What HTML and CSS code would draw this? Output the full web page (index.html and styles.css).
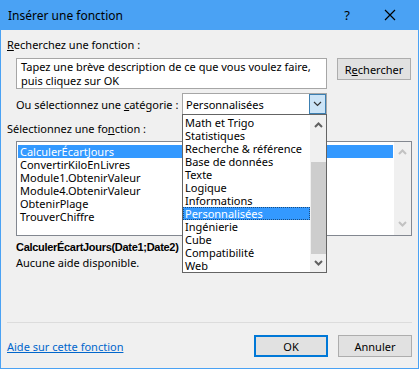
FILE: index.html
```html
<!DOCTYPE html>
<html lang="fr">
<head>
  <meta charset="UTF-8">
  <title>Insérer une fonction</title>
  <link rel="stylesheet" href="styles.css">
</head>
<body>
  <div class="window">
    <div class="titlebar">
      <span class="title">Insérer une fonction</span>
      <span class="help">?</span>
      <svg class="close" width="12" height="12" viewBox="0 0 12 12"><path d="M1 1L11 11M11 1L1 11" stroke="#000" stroke-width="1.2"/></svg>
    </div>
    <div class="content">
      <div class="label"><u>R</u>echerchez une fonction :</div>
      <div class="search-row">
        <div class="search-box">Tapez une brève description de ce que vous voulez faire,<br>puis cliquez sur OK</div>
        <button class="btn">R<u>e</u>chercher</button>
      </div>
      <div class="category-row">
        <span class="cat-label">Ou sélectionnez une <u>c</u>atégorie :</span>
        <div class="select">
          <span class="select-value">Personnalisées</span>
          <span class="select-arrow">
            <svg width="9" height="6" viewBox="0 0 9 6"><path d="M1 1L4.5 4.5L8 1" fill="none" stroke="#333" stroke-width="1.2"/></svg>
          </span>
          <div class="dropdown">
            <ul class="dropdown-items">
              <li>Math et Trigo</li>
              <li>Statistiques</li>
              <li>Recherche &amp; référence</li>
              <li>Base de données</li>
              <li>Texte</li>
              <li>Logique</li>
              <li>Informations</li>
              <li class="selected">Personnalisées</li>
              <li>Ingénierie</li>
              <li>Cube</li>
              <li>Compatibilité</li>
              <li>Web</li>
            </ul>
            <div class="dd-scroll">
              <svg class="arrow-up" width="9" height="6" viewBox="0 0 9 6"><path d="M1 5L4.5 1.5L8 5" fill="none" stroke="#606060" stroke-width="2"/></svg>
              <div class="dd-thumb"></div>
              <svg class="arrow-down" width="9" height="6" viewBox="0 0 9 6"><path d="M1 1L4.5 4.5L8 1" fill="none" stroke="#606060" stroke-width="2"/></svg>
            </div>
          </div>
        </div>
      </div>
      <div class="label fn-label">Sélectionnez une fo<u>n</u>ction :</div>
      <div class="listbox">
        <ul class="list-items">
          <li class="selected">CalculerÉcartJours</li>
          <li>ConvertirKiloEnLivres</li>
          <li>Module1.ObtenirValeur</li>
          <li>Module4.ObtenirValeur</li>
          <li>ObtenirPlage</li>
          <li>TrouverChiffre</li>
        </ul>
        <div class="list-scroll">
          <svg width="9" height="6" viewBox="0 0 9 6"><path d="M1 5L4.5 1.5L8 5" fill="none" stroke="#c2c2c2" stroke-width="2"/></svg>
          <svg width="9" height="6" viewBox="0 0 9 6"><path d="M1 1L4.5 4.5L8 1" fill="none" stroke="#c2c2c2" stroke-width="2"/></svg>
        </div>
      </div>
      <div class="signature">CalculerÉcartJours(Date1;Date2)</div>
      <div class="description">Aucune aide disponible.</div>
      <div class="separator"></div>
      <div class="footer">
        <a class="help-link" href="#">Aide sur cette fonction</a>
        <div class="footer-buttons">
          <button class="btn btn-default">OK</button>
          <button class="btn">Annuler</button>
        </div>
      </div>
    </div>
  </div>
</body>
</html>
```

FILE: styles.css
```css
html, body {
  margin: 0;
  padding: 0;
}
body {
  font-family: 'Noto Sans', 'Liberation Sans', sans-serif;
  font-size: 11px;
  color: #000;
  background: #f0f0f0;
  white-space: nowrap;
}
ul {
  list-style: none;
  margin: 0;
  padding: 0;
}
.window {
  width: 419px;
  height: 369px;
  box-sizing: border-box;
  border: 1px solid #4aa2f4;
  border-top: none;
  background: #f0f0f0;
  display: flex;
  flex-direction: column;
}
.titlebar {
  height: 30px;
  background: #4aa2f4;
  display: flex;
  align-items: center;
  padding-left: 8px;
  margin: 0 -1px;
  flex-shrink: 0;
}
.title {
  flex: 1;
  font-size: 12px;
}
.help {
  width: 14px;
  text-align: center;
  margin-right: 30px;
  font-size: 13px;
}
.close {
  margin-right: 23px;
}
.content {
  padding: 7px 6px 0 6px;
  flex: 1;
  display: flex;
  flex-direction: column;
}
.label {
  line-height: 16px;
  height: 16px;
}
.search-row {
  display: flex;
  align-items: flex-start;
  margin-top: 5px;
  padding-left: 9px;
}
.search-box {
  width: 311px;
  height: 31px;
  box-sizing: border-box;
  border: 1px solid #a6a6a6;
  background: #fff;
  padding: 1px 0 0 4px;
  line-height: 14px;
}
.btn {
  font-family: inherit;
  font-size: 11px;
  color: #000;
  width: 74px;
  height: 22px;
  box-sizing: border-box;
  border: 1px solid #adadad;
  background: #e1e1e1;
  padding: 0;
  margin-left: 10px;
}
.category-row {
  display: flex;
  align-items: center;
  margin-top: 4px;
  padding-left: 9px;
  height: 22px;
}
.cat-label {
  width: 166px;
}
.select {
  position: relative;
  width: 145px;
  height: 22px;
  box-sizing: border-box;
  border: 1px solid #a6a6a6;
  background: #fff;
  display: flex;
  align-items: center;
}
.select-value {
  flex: 1;
  padding-left: 3px;
}
.select-arrow {
  width: 15px;
  height: 18px;
  border: 1px solid #3c7fb1;
  background: #cce4f7;
  display: flex;
  align-items: center;
  justify-content: center;
}
.dropdown {
  position: absolute;
  left: -1px;
  top: 20px;
  width: 145px;
  height: 159px;
  box-sizing: border-box;
  border: 1px solid #646464;
  background: #fff;
  display: flex;
  z-index: 2;
}
.dropdown-items {
  flex: 1;
  padding-top: 1px;
}
.dropdown-items li {
  height: 13px;
  line-height: 13px;
  padding-left: 2px;
}
.dropdown-items li.selected {
  background: #3399ff;
  color: #fff;
  outline: 1px dotted #1a4d80;
  outline-offset: -1px;
}
.dd-scroll {
  width: 16px;
  background: #f0f0f0;
  display: flex;
  flex-direction: column;
  align-items: center;
}
.arrow-up {
  margin-top: 7px;
}
.dd-thumb {
  width: 15px;
  height: 92px;
  background: #cdcdcd;
  margin-top: 34px;
}
.arrow-down {
  margin-top: 6px;
}
.fn-label {
  margin-top: 6px;
}
.listbox {
  margin-top: 4px;
  margin-left: 9px;
  width: 396px;
  height: 95px;
  box-sizing: border-box;
  border: 1px solid #828790;
  background: #fff;
  display: flex;
}
.list-items {
  flex: 1;
  padding: 3px 0 0 1px;
}
.list-items li {
  height: 13px;
  line-height: 13px;
  padding-left: 2px;
}
.list-items li.selected {
  background: #3399ff;
  color: #fff;
  margin-right: 1px;
}
.list-scroll {
  width: 17px;
  background: #f0f0f0;
  display: flex;
  flex-direction: column;
  align-items: center;
  justify-content: space-between;
  padding: 7px 0 8px;
  box-sizing: border-box;
}
.signature {
  font-family: 'Liberation Sans', sans-serif;
  font-weight: bold;
  letter-spacing: -0.3px;
  margin: 4px 0 0 9px;
  line-height: 15px;
}
.description {
  margin-left: 9px;
  line-height: 15px;
}
.separator {
  margin-top: 52px;
  height: 1px;
  background: #dcdcdc;
  width: 405px;
}
.footer {
  display: flex;
  align-items: center;
  justify-content: space-between;
  margin-top: 12px;
}
.help-link {
  color: #0066cc;
}
.footer-buttons {
  display: flex;
}
.btn-default {
  border: 2px solid #0078d7;
}
```
